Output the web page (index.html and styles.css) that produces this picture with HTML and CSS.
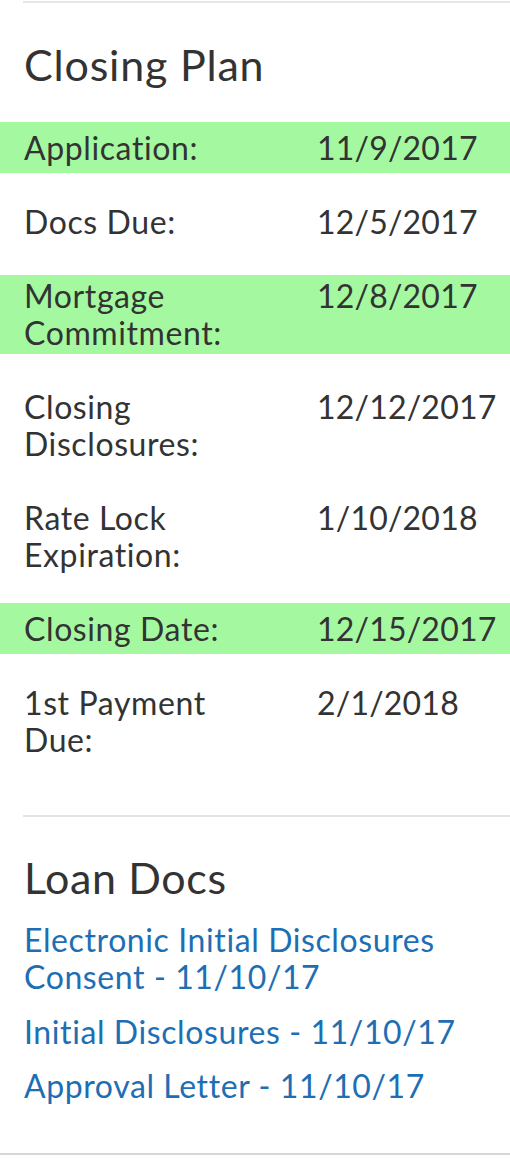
FILE: index.html
```html
<!DOCTYPE html>
<html lang="en">
<head>
<meta charset="utf-8">
<title>Closing Plan</title>
<link rel="stylesheet" href="styles.css">
</head>
<body>
<div class="divider divider-top"></div>
<section class="plan">
  <h2 class="title">Closing Plan</h2>
  <div class="rows">
    <div class="row hl"><div class="label">Application:</div><div class="date">11/9/2017</div></div>
    <div class="row"><div class="label">Docs Due:</div><div class="date">12/5/2017</div></div>
    <div class="row hl wrap"><div class="label">Mortgage Commitment:</div><div class="date">12/8/2017</div></div>
    <div class="row"><div class="label">Closing Disclosures:</div><div class="date">12/12/2017</div></div>
    <div class="row"><div class="label">Rate Lock Expiration:</div><div class="date">1/10/2018</div></div>
    <div class="row hl"><div class="label">Closing Date:</div><div class="date">12/15/2017</div></div>
    <div class="row"><div class="label">1st Payment Due:</div><div class="date">2/1/2018</div></div>
  </div>
</section>
<div class="divider divider-mid"></div>
<section class="docs">
  <h2 class="title title-docs">Loan Docs</h2>
  <div class="links">
    <a class="doc-link" href="#">Electronic Initial Disclosures Consent - 11/10/17</a>
    <a class="doc-link" href="#">Initial Disclosures - 11/10/17</a>
    <a class="doc-link" href="#">Approval Letter - 11/10/17</a>
  </div>
</section>
<div class="divider divider-bottom"></div>
</body>
</html>
```
FILE: styles.css
```css
html, body {
  margin: 0;
  padding: 0;
  background: #ffffff;
}

body {
  font-family: Lato, "Open Sans", sans-serif;
  color: #333333;
  width: 510px;
}

.divider {
  height: 2px;
  background: #e6e6e6;
}

.divider-top {
  margin: 1px 0 0 23px;
}

.divider-mid {
  margin: 50px 0 0 23px;
  background: #e3e3e3;
}

.divider-bottom {
  margin: 49px 0 0 0;
  background: #d6d6d6;
}

.title {
  font-weight: 400;
  font-size: 43px;
  line-height: 52px;
  letter-spacing: 0.8px;
  margin: 36px 24px 31px 24px;
  color: #333333;
}

.title-docs {
  margin: 34.5px 24px 17.5px 24px;
  letter-spacing: 0.6px;
}

.rows {
  display: flex;
  flex-direction: column;
  gap: 23px;
}

.row {
  display: grid;
  grid-template-columns: 240px auto;
  column-gap: 54px;
  align-items: baseline;
  padding: 7px 0 7px 24px;
  font-size: 32px;
  line-height: 37px;
  letter-spacing: 0.6px;
}

.date {
  margin-left: -1px;
  letter-spacing: 0.2px;
}

.row.hl {
  background: #a4f9a0;
}

.row.hl.wrap {
  background: linear-gradient(#a4f9a0, #a4f9a0) 0 4.5px / 100% calc(100% - 9px) no-repeat;
}

.links {
  display: flex;
  flex-direction: column;
  gap: 17.5px;
  padding: 0 24px;
}

.doc-link {
  font-size: 32px;
  line-height: 37px;
  letter-spacing: 0.6px;
  color: #1e6eb4;
  text-decoration: none;
}
```
